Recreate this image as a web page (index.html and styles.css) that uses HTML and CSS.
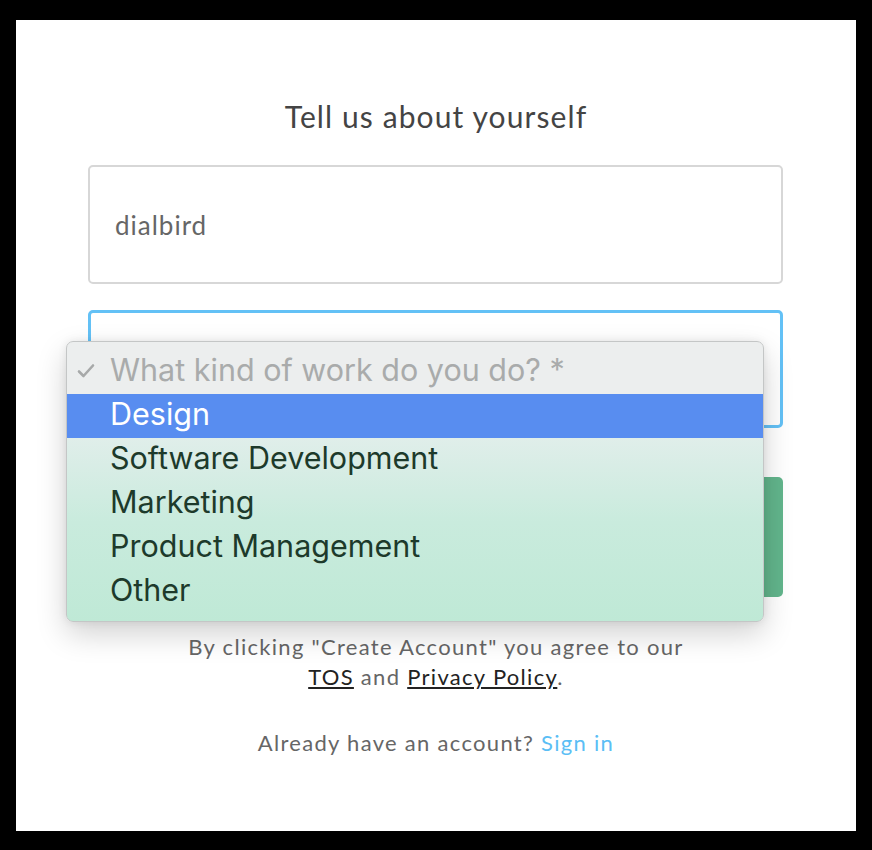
FILE: index.html
```html
<!DOCTYPE html>
<html>
<head>
<meta charset="utf-8">
<link rel="stylesheet" href="styles.css">
</head>
<body>
<div class="card">
  <h1 class="title">Tell us about yourself</h1>
  <div class="form">
    <div class="field">dialbird</div>
    <div class="field-wrap">
      <div class="field field-focus"></div>
      <div class="menu">
        <div class="menu-row menu-placeholder">
          <svg class="check" width="18" height="16" viewBox="0 0 18 16"><polyline points="2,8.5 6.5,13 16,2.5" fill="none" stroke="#a7a9a9" stroke-width="2.6" stroke-linecap="round" stroke-linejoin="round"/></svg>
          What kind of work do you do? *
        </div>
        <div class="menu-row menu-active">Design</div>
        <div class="menu-row">Software Development</div>
        <div class="menu-row">Marketing</div>
        <div class="menu-row">Product Management</div>
        <div class="menu-row">Other</div>
      </div>
    </div>
    <div class="button"></div>
  </div>
  <p class="terms">By clicking "Create Account" you agree to our<br><a class="doc-link">TOS</a> and <a class="doc-link">Privacy Policy</a>.</p>
  <p class="signin">Already have an account? <a class="signin-link">Sign in</a></p>
</div>
</body>
</html>
```

FILE: styles.css
```css
html, body {
  margin: 0;
  padding: 0;
  background: #000;
}
body {
  padding: 20px 16px 19px;
  font-family: "Lato", "Open Sans", sans-serif;
}
.card {
  background: #fff;
  height: 811px;
  box-sizing: border-box;
  padding-top: 76px;
  display: flex;
  flex-direction: column;
  align-items: center;
}
.title {
  margin: 0;
  font-weight: 400;
  font-size: 30px;
  line-height: 40px;
  letter-spacing: 1.1px;
  color: #444;
}
.form {
  width: 695px;
  margin-top: 29px;
  margin-left: -1px;
  display: flex;
  flex-direction: column;
}
.field {
  height: 119px;
  box-sizing: border-box;
  border: 2px solid #d7d7d7;
  border-radius: 5px;
  padding-left: 25px;
  display: flex;
  align-items: center;
  font-size: 26px;
  letter-spacing: 1px;
  color: #666;
}
.field-wrap {
  position: relative;
  margin-top: 26px;
}
.field-focus {
  height: 118px;
  border: 3px solid #63c1f6;
}
.button {
  margin-top: 49px;
  height: 120px;
  border-radius: 5px;
  background: #62b58c;
}
.menu {
  position: absolute;
  left: -22px;
  top: 31px;
  width: 698px;
  height: 281px;
  box-sizing: border-box;
  border: 1px solid #c4c6c6;
  border-radius: 7px;
  padding-top: 8px;
  background: linear-gradient(to bottom, #eceeee 0, #eceeee 52px, #e0eeea 96px, #c9ebdd 180px, #bfe9d6 100%);
  box-shadow: 0 12px 30px rgba(0,0,0,0.18), 0 0 8px rgba(0,0,0,0.08);
  font-family: "Inter", "Roboto", sans-serif;
  font-size: 30.5px;
  color: #1d3a2b;
  overflow: hidden;
}
.menu-row {
  height: 44px;
  line-height: 40px;
  padding-left: 43px;
  position: relative;
  white-space: nowrap;
}
.menu-placeholder {
  color: #a9abab;
}
.check {
  position: absolute;
  left: 10px;
  top: 13px;
}
.menu-active {
  background: #588df0;
  color: #fff;
}
.terms {
  margin: 35px 0 0;
  font-size: 22px;
  line-height: 30px;
  letter-spacing: 1.3px;
  color: #666;
  text-align: center;
}
.doc-link {
  color: #222;
  text-decoration: underline;
}
.signin {
  margin: 36px 0 0;
  font-size: 22px;
  line-height: 30px;
  letter-spacing: 1.3px;
  color: #666;
  text-align: center;
}
.signin-link {
  color: #5bbef5;
}
```
